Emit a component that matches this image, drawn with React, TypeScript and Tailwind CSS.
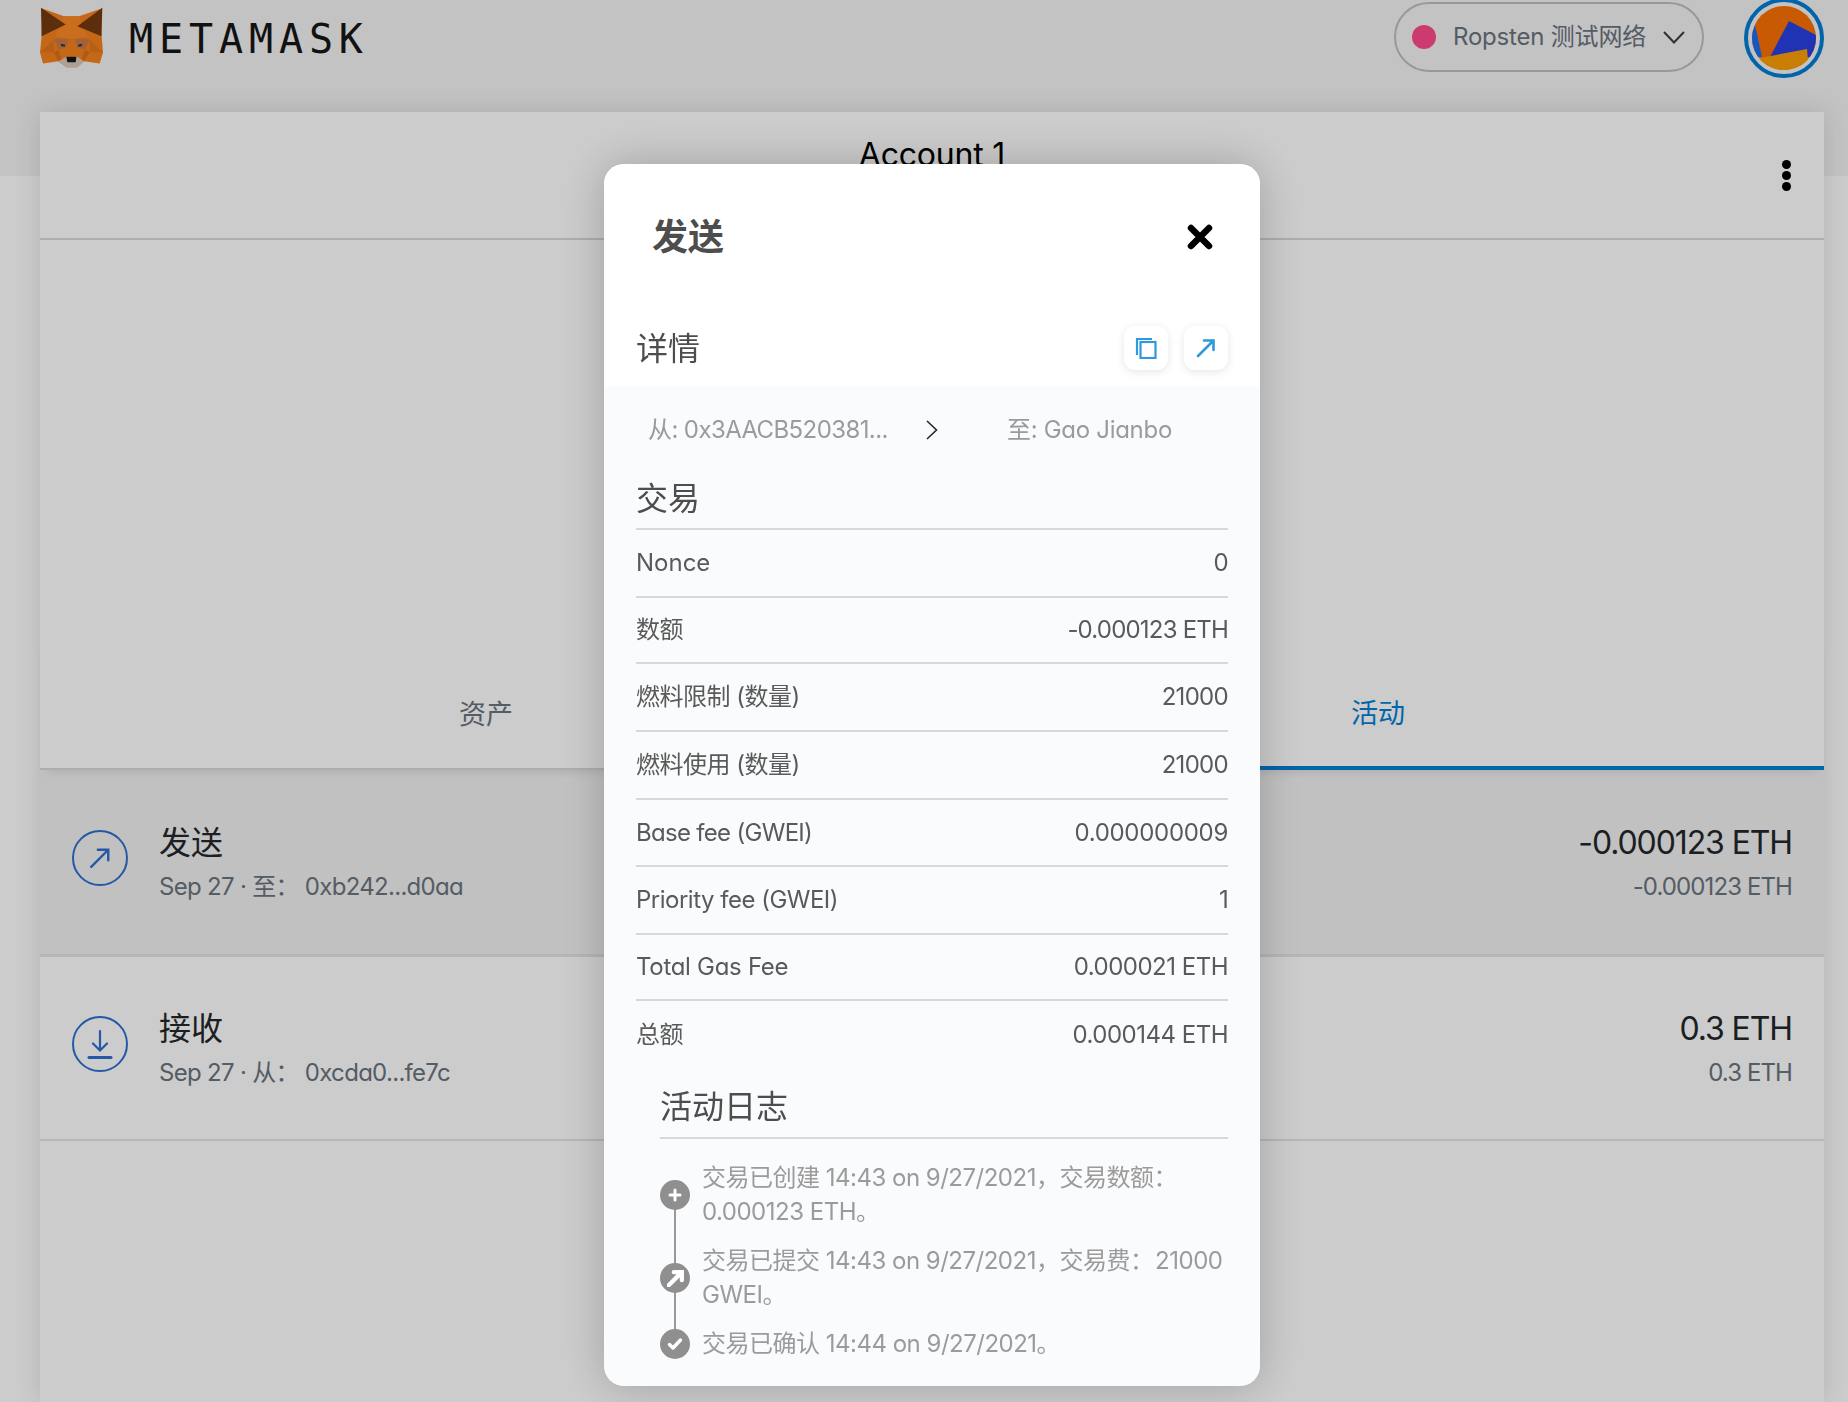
import React from "react";

const rows = [
  { label: "Nonce", value: "0", height: "h-[68px]", labelClass: "tracking-[0px]", valueClass: "tracking-[-0.7px]" },
  { label: "数额", value: "-0.000123 ETH", height: "h-[66px]", labelClass: "tracking-[-0.5px]", valueClass: "tracking-[-0.8px]" },
  { label: "燃料限制 (数量)", value: "21000", height: "h-[68px]", labelClass: "tracking-[-0.5px]", valueClass: "tracking-[-0.7px]" },
  { label: "燃料使用 (数量)", value: "21000", height: "h-[68px]", labelClass: "tracking-[-0.5px]", valueClass: "tracking-[-0.7px]" },
  { label: "Base fee (GWEI)", value: "0.000000009", height: "h-[67px]", labelClass: "tracking-[-0.7px]", valueClass: "tracking-[-0.3px]" },
  { label: "Priority fee (GWEI)", value: "1", height: "h-[68px]", labelClass: "tracking-[-0.5px]", valueClass: "tracking-[-0.7px]" },
  { label: "Total Gas Fee", value: "0.000021 ETH", height: "h-[66px]", labelClass: "tracking-[-0.3px]", valueClass: "tracking-[-0.5px]" },
  { label: "总额", value: "0.000144 ETH", height: "h-[68px]", labelClass: "tracking-[-0.5px]", valueClass: "tracking-[-0.5px]" },
];

function Fox() {
  return (
    <svg width="65" height="62" viewBox="30 20 195 185">
      <polygon points="40,27 105,50 150,50 218,27 218,110 222,160 212,192 165,185 145,203 112,203 88,185 42,192 33,158 38,110" fill="#f5821f" />
      <polygon points="105,50 150,50 178,112 137,118 120,118 78,112" fill="#fb8a25" />
      <polygon points="36,25 110,75 38,110" fill="#733a0f" />
      <polygon points="220,25 145,80 217,110" fill="#733a0f" />
      <polygon points="75,118 120,118 112,145 88,150" fill="#ce7a48" />
      <polygon points="182,118 137,118 145,145 168,150" fill="#ce7a48" />
      <polygon points="33,158 75,120 75,158" fill="#e8761d" />
      <polygon points="222,158 182,120 182,158" fill="#e8761d" />
      <polygon points="75,158 88,150 100,185 88,185" fill="#e0701c" />
      <polygon points="182,158 168,150 155,185 165,185" fill="#e0701c" />
      <polygon points="95,133 108,136 108,141 97,140" fill="#233447" />
      <polygon points="160,133 147,136 147,141 158,140" fill="#233447" />
      <polygon points="88,185 112,172 145,172 165,185 145,203 112,203" fill="#dcc8ba" />
      <polygon points="112,172 142,172 140,188 115,188" fill="#161616" />
    </svg>
  );
}

function Avatar() {
  return (
    <div className="-mt-[2px] flex h-[80px] w-[80px] items-center justify-center rounded-full border-[4px] border-[#037dd6]">
      <svg width="64" height="64" viewBox="0 0 64 64" className="rounded-full">
        <rect width="64" height="64" fill="#fa7106" />
        <polygon points="0,27 3,19 10,51 0,51" fill="#1c6ff4" />
        <polygon points="37,15 64,29 64,51 18,51" fill="#2840e2" />
        <polygon points="8,52 55,43 57,66 8,66" fill="#fa9f06" />
      </svg>
    </div>
  );
}

function ArrowUpRight({ size, color, width }: { size: number; color: string; width: number }) {
  return (
    <svg width={size} height={size} viewBox="0 0 20 20" fill="none" stroke={color} strokeWidth={width} strokeLinecap="round">
      <path d="M2 18L17.5 2.5M8 2.5H17.5V12" />
    </svg>
  );
}

function ActivityRow({
  icon,
  title,
  sub,
  amount,
  active,
}: {
  icon: React.ReactNode;
  title: string;
  sub: string;
  amount: string;
  active?: boolean;
}) {
  return (
    <div className={`flex items-center ${active ? "h-[187px] border-b-[3px] border-[#e4e4e4] bg-[#f2f2f2]" : "h-[184px] border-b-2 border-[#e4e4e4]"}`}>
      <div className="-mt-[8px] ml-[32px] flex h-[56px] w-[56px] shrink-0 items-center justify-center rounded-full border-2 border-[#2f6fd0]">{icon}</div>
      <div className="ml-[31px] mt-[3px] flex flex-col">
        <div className="text-[32px] leading-[40px] text-[#24272a]">{title}</div>
        <div className="mt-[7px] text-[24px] leading-[34px] tracking-[-0.7px] text-[#6a737d]">{sub}</div>
      </div>
      <div className="ml-auto mr-[32px] mt-[3px] flex flex-col items-end">
        <div className="text-[32px] leading-[40px] tracking-[-1.1px] text-[#24272a]">{amount}</div>
        <div className="mt-[7px] text-[24px] leading-[34px] tracking-[-0.9px] text-[#6a737d]">{amount}</div>
      </div>
    </div>
  );
}

function LogItem({ icon, children }: { icon: React.ReactNode; children: React.ReactNode }) {
  return (
    <div className="flex items-center">
      <div className="relative z-10 flex h-[30px] w-[30px] shrink-0 items-center justify-center rounded-full bg-[#8f8f8f]">{icon}</div>
      <div className="ml-[12px] text-[24px] leading-[34px] tracking-[-0.5px] text-[#9b9b9b]">{children}</div>
    </div>
  );
}

export default function App() {
  return (
    <div className="relative h-[1402px] w-full overflow-hidden bg-white [font-family:Inter,'Noto_Sans_CJK_SC',sans-serif] [font-feature-settings:'cv11']">
      <header className="flex h-[176px] items-start justify-between bg-[#f4f4f4] pl-[39px] pr-[24px]">
        <div className="mt-[6px] flex items-start">
          <Fox />
          <span className="ml-[25px] mt-[10px] text-[40px] leading-[47px] tracking-[5.9px] text-[#161616] [font-family:'DejaVu_Sans_Mono',monospace]">METAMASK</span>
        </div>
        <div className="flex items-start">
          <div className="mt-[2px] flex h-[70px] w-[310px] items-center rounded-full border-2 border-[#bbc0c5] pl-[16px]">
            <span className="h-[24px] w-[24px] rounded-full bg-[#ff4a8d]" />
            <span className="ml-[17px] text-[24px] leading-[34px] tracking-[-0.2px] text-[#6a737d]">Ropsten 测试网络</span>
            <svg width="22" height="13" viewBox="0 0 22 13" fill="none" stroke="#3a3d40" strokeWidth="2" className="ml-[17px]">
              <path d="M1 1L11 11.5L21 1" />
            </svg>
          </div>
          <div className="ml-[40px]">
            <Avatar />
          </div>
        </div>
      </header>

      <main className="relative ml-[40px] mr-[24px] -mt-[64px] h-[1290px] bg-white shadow-[0_0_24px_rgba(0,0,0,0.12)]">
        <div className="relative flex h-[128px] items-start justify-center border-b-2 border-[#d6d9dc]">
          <span className="mt-[22px] text-[32px] leading-[42px] tracking-[-0.2px] text-black">Account 1</span>
          <div className="absolute right-[33px] top-[48px] flex flex-col gap-[2px]">
            <span className="h-[9px] w-[9px] rounded-full bg-black" />
            <span className="h-[9px] w-[9px] rounded-full bg-black" />
            <span className="h-[9px] w-[9px] rounded-full bg-black" />
          </div>
        </div>

        <div className="h-[399px]" />

        <div className="relative z-10 flex h-[131px] shadow-[0_8px_10px_-6px_rgba(0,0,0,0.1)]">
          <div className="flex w-1/2 items-center justify-center border-b-2 border-[#d6d9dc] pt-[24px] text-[27px] text-[#6a737d]">资产</div>
          <div className="flex w-1/2 items-center justify-center border-b-[4px] border-[#037dd6] pt-[24px] text-[27px] text-[#037dd6]">活动</div>
        </div>

        <ActivityRow
          active
          icon={<ArrowUpRight size={22} color="#2f6fd0" width={2.2} />}
          title="发送"
          sub="Sep 27 · 至： 0xb242...d0aa"
          amount="-0.000123 ETH"
        />
        <ActivityRow
          icon={
            <svg width="26" height="32" viewBox="0 0 26 32" fill="none" stroke="#2f6fd0" strokeLinecap="round">
              <path d="M13 3V22M6 15.5L13 22.5L20 15.5" strokeWidth="2.2" />
              <path d="M2 29.5H24" strokeWidth="3" />
            </svg>
          }
          title="接收"
          sub="Sep 27 · 从： 0xcda0...fe7c"
          amount="0.3 ETH"
        />
      </main>

      {/* dimmed layer plus the transaction modal */}
      <div className="fixed inset-0 z-50 flex items-start justify-center bg-black/20 pl-[16px] pt-[164px]">
        <div className="h-[1222px] w-[656px] overflow-hidden rounded-[20px] bg-[#fafbfc] shadow-[0_0_45px_rgba(0,0,0,0.22)]">
          <div className="h-[222px] bg-white">
            <div className="flex h-[146px] items-center justify-between pl-[48px] pr-[47px]">
              <span className="text-[36px] font-bold leading-[46px] text-[#4d4d4d]">发送</span>
              <svg width="26" height="26" viewBox="0 0 26 26" fill="none" stroke="#000" strokeWidth="6.5" strokeLinecap="round">
                <path d="M4 4L22 22M22 4L4 22" />
              </svg>
            </div>
            <div className="mt-[16px] flex h-[44px] items-center justify-between px-[32px]">
              <span className="mt-[2px] text-[32px] leading-[44px] text-[#4d4d4d]">详情</span>
              <div className="flex gap-[16px]">
                <button className="flex h-[44px] w-[44px] items-center justify-center rounded-[11px] bg-white shadow-[0_2px_8px_rgba(0,0,0,0.1)]">
                  <svg width="22" height="22" viewBox="0 0 22 22" fill="none" stroke="#3098dc" strokeWidth="2.2">
                    <path d="M2 18V2H17" />
                    <rect x="5.5" y="5" width="15" height="16" />
                  </svg>
                </button>
                <button className="flex h-[44px] w-[44px] items-center justify-center rounded-[11px] bg-white shadow-[0_2px_8px_rgba(0,0,0,0.1)]">
                  <ArrowUpRight size={20} color="#3098dc" width={2.6} />
                </button>
              </div>
            </div>
          </div>

          <div className="mb-[4px] flex h-[88px] items-center text-[24px] leading-[34px] text-[#9b9b9b]">
            <span className="ml-[44px] w-[278px] tracking-[-0.6px]">从: 0x3AACB520381...</span>
            <svg width="12" height="20" viewBox="0 0 12 20" fill="none" stroke="#24272a" strokeWidth="1.6">
              <path d="M1 1L10.5 10L1 19" />
            </svg>
            <span className="ml-[69px] tracking-[-0.3px]">至: Gao Jianbo</span>
          </div>

          <div className="mx-[32px]">
            <div className="border-b-2 border-[#d6d9dc] pb-[8px] text-[32px] leading-[42px] text-[#4d4d4d]">交易</div>
            {rows.map((row, i) => (
              <div
                key={row.label}
                className={`flex items-center justify-between ${row.height} text-[24px] leading-[34px] text-[#5a5a5a] ${i < rows.length - 1 ? "border-b-2 border-[#d6d9dc]" : ""}`}
              >
                <span className={row.labelClass}>{row.label}</span>
                <span className={row.valueClass}>{row.value}</span>
              </div>
            ))}
          </div>

          <div className="ml-[56px] mr-[32px]">
            <div className="mt-[16px] border-b-2 border-[#d6d9dc] pb-[8px] text-[32px] leading-[44px] text-[#4d4d4d]">活动日志</div>
            <div className="relative mt-[22px] flex flex-col gap-[15px]">
              <div className="absolute bottom-[17px] left-[14px] top-[34px] w-[2px] bg-[#999999]" />
              <LogItem
                icon={
                  <svg width="14" height="14" viewBox="0 0 14 14" stroke="#fff" strokeWidth="3" strokeLinecap="round">
                    <path d="M7 2V12M2 7H12" />
                  </svg>
                }
              >
                交易已创建 14:43 on 9/27/2021，交易数额：
                <br />
                0.000123 ETH。
              </LogItem>
              <LogItem icon={<ArrowUpRight size={17} color="#fff" width={5} />}>
                交易已提交 14:43 on 9/27/2021，交易费：{"\u200a"}21000
                <br />
                GWEI。
              </LogItem>
              <LogItem
                icon={
                  <svg width="16" height="14" viewBox="0 0 16 14" fill="none" stroke="#fff" strokeWidth="3.4" strokeLinecap="round" strokeLinejoin="round">
                    <path d="M2.5 7.5L6 11L13.5 3" />
                  </svg>
                }
              >
                交易已确认 14:44 on 9/27/2021。
              </LogItem>
            </div>
          </div>
        </div>
      </div>
    </div>
  );
}
